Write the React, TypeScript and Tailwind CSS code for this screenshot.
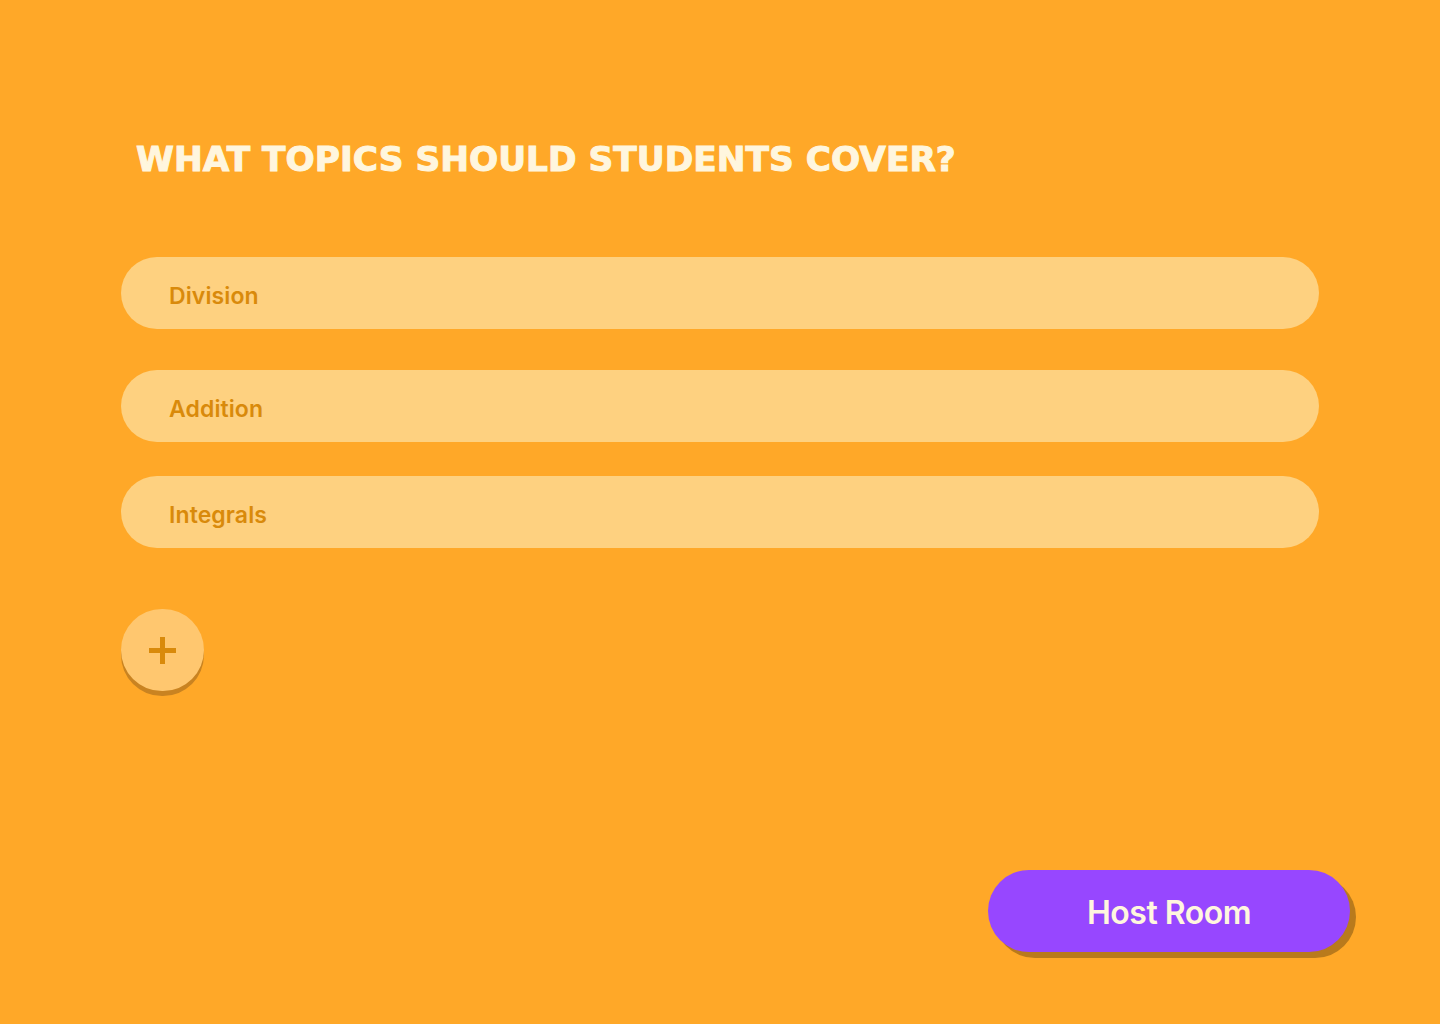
import React from "react";

export default function App() {
  const topics = [
    { label: "Division", mt: "mt-[77px]" },
    { label: "Addition", mt: "mt-[41px]" },
    { label: "Integrals", mt: "mt-[34px]" },
  ];
  return (
    <div className="w-[1440px] h-[1024px] bg-[#FFA828] relative overflow-hidden" style={{ fontFamily: "Inter, 'Noto Sans', sans-serif" }}>
      <div className="pl-[121px] pr-[121px] pt-[138px] flex flex-col">
        <h1
          className="pl-[15px] text-[34.4px] leading-[42px] font-bold text-[#FFF6DE] m-0 [-webkit-text-stroke:1px_#FFF6DE]"
          style={{ fontFamily: "'DejaVu Sans', sans-serif" }}
        >
          WHAT TOPICS SHOULD STUDENTS COVER?
        </h1>
        {topics.map((t) => (
          <div
            key={t.label}
            className={`${t.mt} w-[1198px] h-[72px] rounded-full bg-[#FED180] flex items-center pl-[48px] pt-[6px]`}
          >
            <span className="text-[23px] font-semibold text-[#D98A0B] tracking-[0.1px]">{t.label}</span>
          </div>
        ))}
        <div className="mt-[61px] w-[83px] h-[82px] rounded-full bg-[#FFC76F] shadow-[0_5px_0_#C98321] flex items-center justify-center">
          <svg width="27" height="27" viewBox="0 0 27 27">
            <rect x="11" y="0" width="5" height="27" fill="#D98A0B" />
            <rect x="0" y="11" width="27" height="5" fill="#D98A0B" />
          </svg>
        </div>
      </div>
      <button className="absolute left-[988px] top-[870px] w-[362px] h-[82px] rounded-full bg-[#9747FF] shadow-[6px_6px_0_#B97A1C] flex items-center justify-center pt-[4px] text-[32px] font-semibold text-[#FFF6DE] tracking-[-0.5px]">
        Host Room
      </button>
    </div>
  );
}
